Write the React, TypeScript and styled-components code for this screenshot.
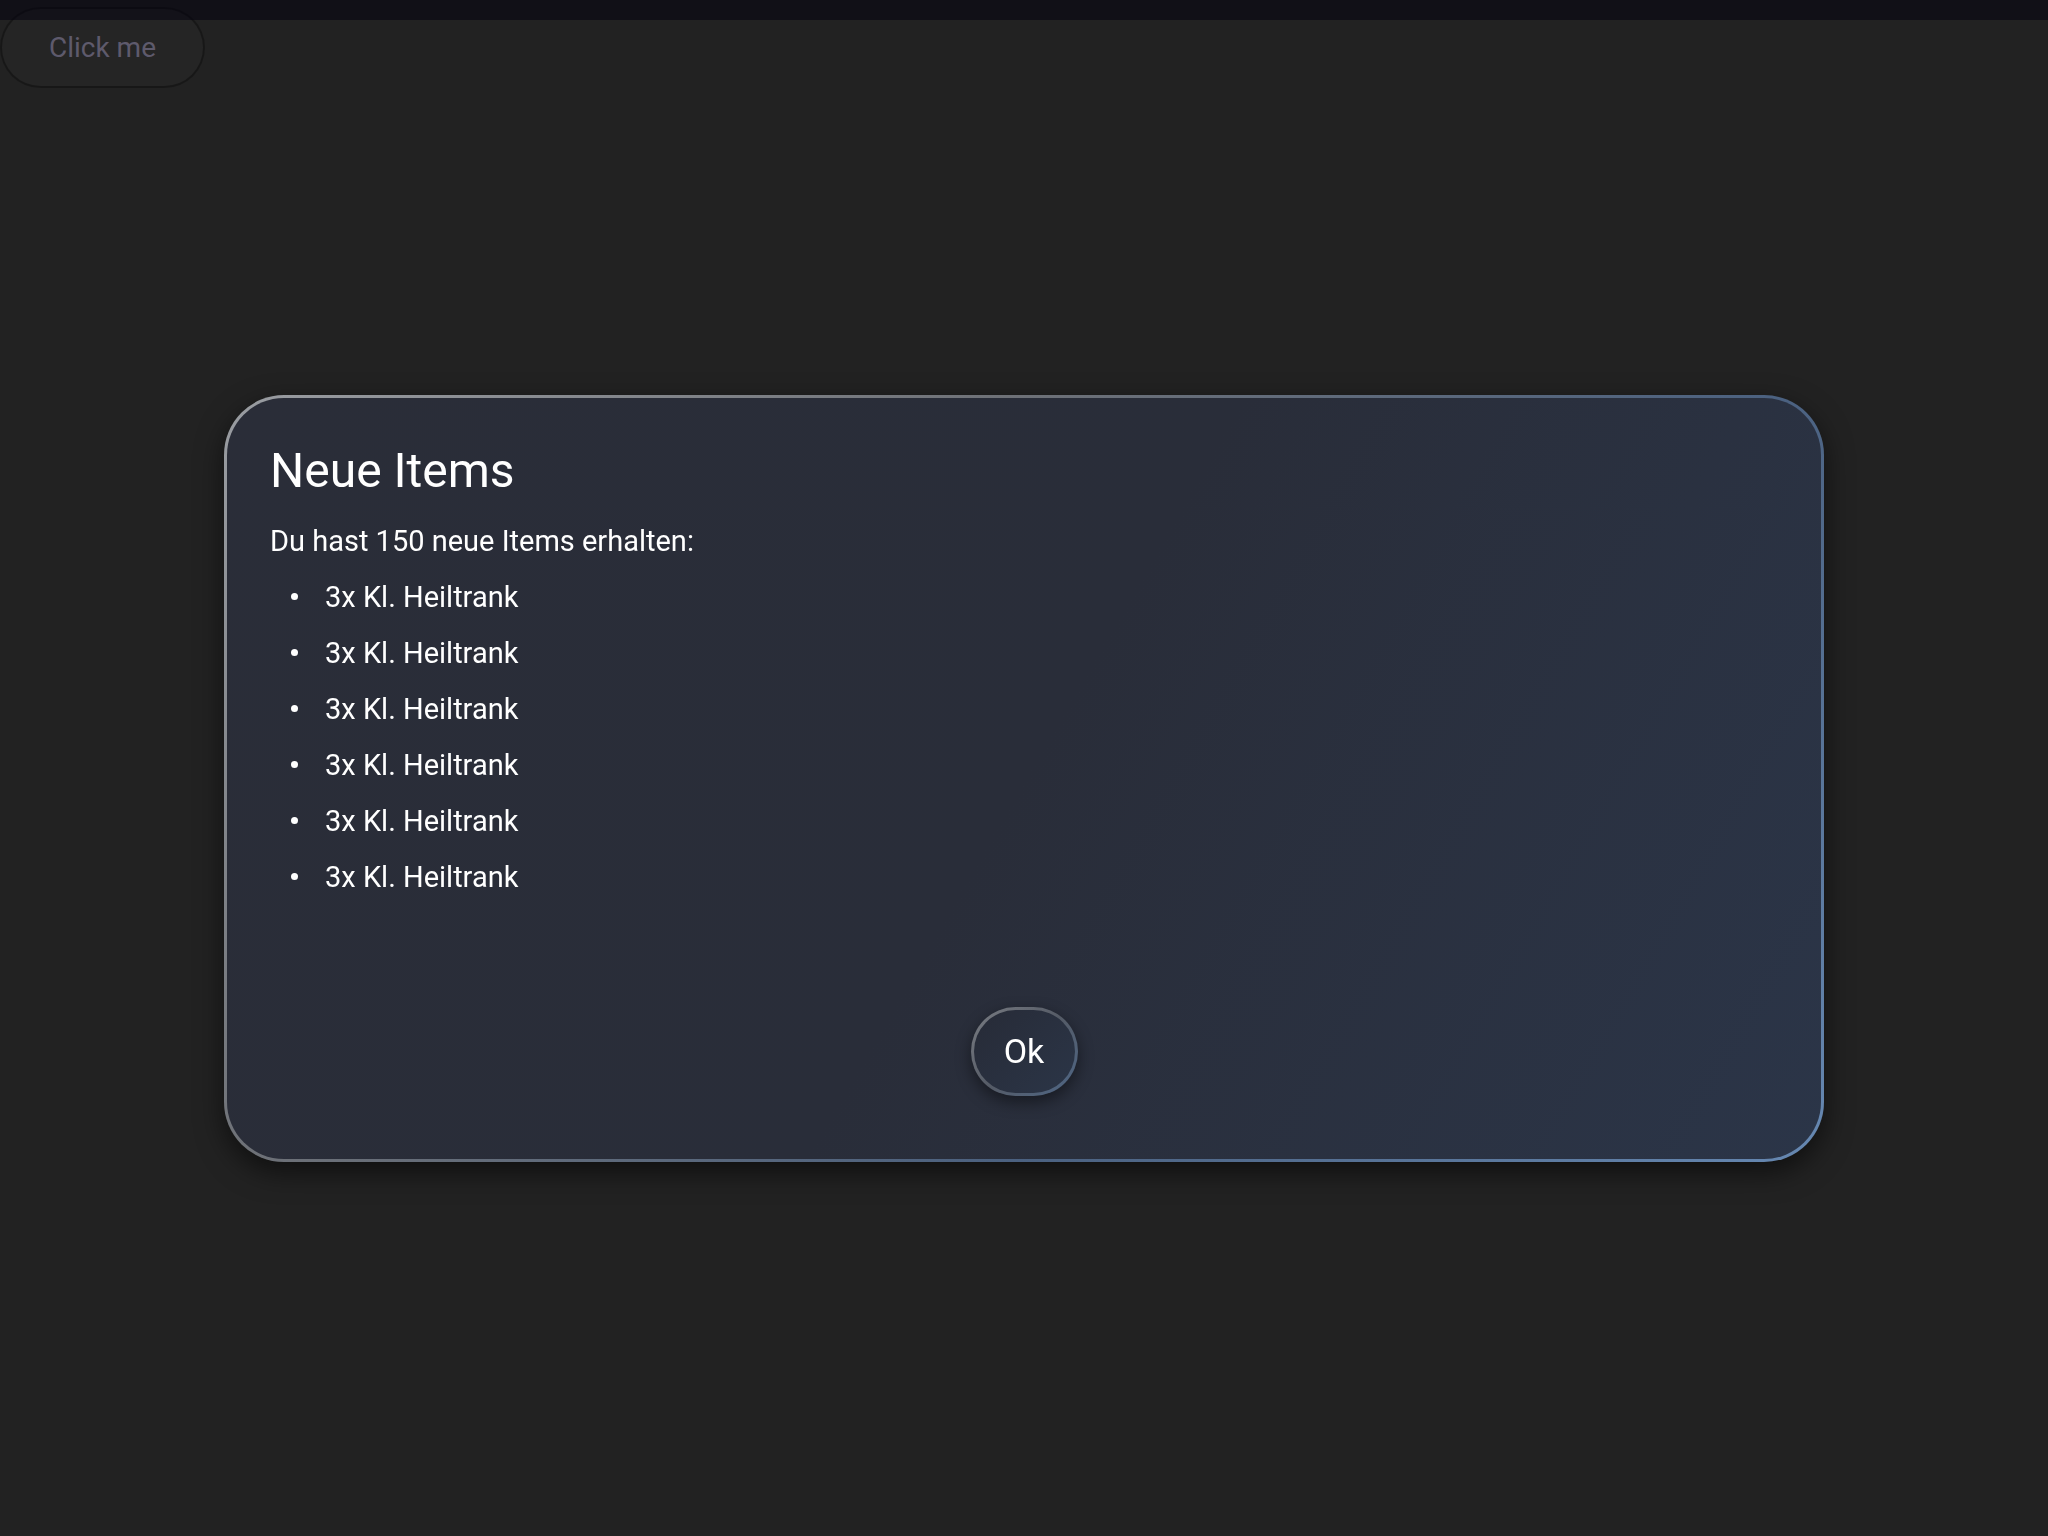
import styled, { createGlobalStyle } from "styled-components";

const GlobalStyle = createGlobalStyle`
  html, body {
    margin: 0;
    padding: 0;
    background: #222222;
    font-family: Roboto, "Noto Sans", "Liberation Sans", sans-serif;
  }
`;

const Page = styled.div`
  min-height: 100vh;
  background: #222222;
  padding-top: 7px;
  box-sizing: border-box;
`;

const TriggerButton = styled.button`
  width: 205px;
  height: 81px;
  border-radius: 41px;
  border: 2px solid rgba(0, 0, 0, 0.35);
  background: rgba(255, 255, 255, 0.015);
  color: #5e5a6c;
  font-family: Roboto, "Liberation Sans", sans-serif;
  font-size: 28px;
  cursor: pointer;
`;

const TopShade = styled.div`
  position: fixed;
  top: 0;
  left: 0;
  right: 0;
  height: 20px;
  background: rgba(6, 4, 15, 0.57);
`;

const Overlay = styled.div`
  position: fixed;
  top: 20px;
  left: 0;
  right: 0;
  bottom: 0;
  display: flex;
  align-items: center;
  justify-content: center;
`;

const Dialog = styled.div`
  width: 1600px;
  height: 767px;
  box-sizing: border-box;
  display: flex;
  flex-direction: column;
  padding: 45px 43px 63px;
  border: 3px solid transparent;
  border-radius: 60px;
  background:
    linear-gradient(120deg, #2a2d38 0%, #292d39 50%, #2b3548 100%) padding-box,
    linear-gradient(135deg, #9a9da2 0%, #6e7177 33%, #4b6180 66%, #6688b2 100%) border-box;
  box-shadow: 0 10px 28px rgba(0, 0, 0, 0.55);
  color: #ffffff;
`;

const Title = styled.h2`
  margin: 0 0 14px;
  font-size: 48px;
  font-weight: 400;
  line-height: 56px;
`;

const Intro = styled.p`
  margin: 0;
  font-size: 29px;
  line-height: 56px;
`;

const ItemList = styled.ul`
  margin: 0;
  padding: 0;
  list-style: none;
`;

const Item = styled.li`
  display: flex;
  align-items: center;
  font-size: 29px;
  line-height: 56px;

  &::before {
    content: "";
    width: 7px;
    height: 7px;
    border-radius: 50%;
    background: #ffffff;
    margin: 0 27px 0 21px;
  }
`;

const Actions = styled.div`
  margin-top: auto;
  display: flex;
  justify-content: center;
`;

const OkButton = styled.button`
  width: 107px;
  height: 89px;
  border-radius: 45px;
  border: 3px solid transparent;
  background:
    linear-gradient(135deg, #272b37, #2b3547) padding-box,
    linear-gradient(135deg, #7a7d83 0%, #555b66 50%, #4d6686 100%) border-box;
  box-shadow: 0 6px 16px rgba(0, 0, 0, 0.45);
  color: #ffffff;
  font-family: Roboto, "Liberation Sans", sans-serif;
  font-size: 34px;
  cursor: pointer;
`;

const items = Array.from({ length: 6 }, () => "3x Kl. Heiltrank");

export default function App() {
  return (
    <>
      <GlobalStyle />
      <Page>
        <TriggerButton>Click me</TriggerButton>
        <TopShade />
        <Overlay>
          <Dialog>
            <Title>Neue Items</Title>
            <Intro>Du hast 150 neue Items erhalten:</Intro>
            <ItemList>
              {items.map((item, i) => (
                <Item key={i}>{item}</Item>
              ))}
            </ItemList>
            <Actions>
              <OkButton>Ok</OkButton>
            </Actions>
          </Dialog>
        </Overlay>
      </Page>
    </>
  );
}
